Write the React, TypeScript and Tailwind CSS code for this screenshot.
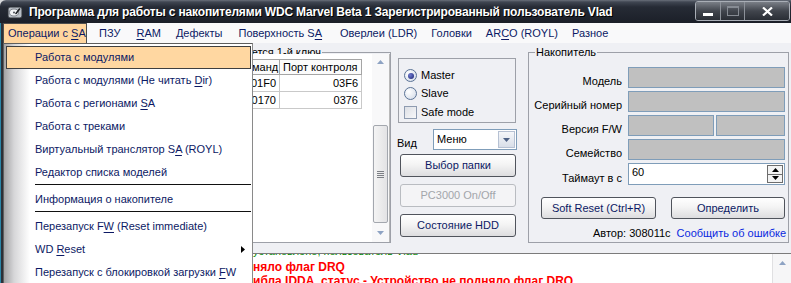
import React from "react";

function U({ c }: { c: string }) {
  return <span className="underline decoration-1 underline-offset-[2px]">{c}</span>;
}

function HddIcon() {
  return (
    <svg width="16" height="16" viewBox="0 0 16 16">
      <rect x="1" y="3" width="14" height="11" rx="2" fill="#b9bfc6" stroke="#2d3137" />
      <ellipse cx="7" cy="8.5" rx="4.5" ry="3.5" fill="#f2f4f6" stroke="#6b7078" strokeWidth="0.8" />
      <circle cx="7" cy="8.5" r="1" fill="#4a4f56" />
      <path d="M12.5 5 L9 9.5" stroke="#1f2226" strokeWidth="1.6" strokeLinecap="round" />
    </svg>
  );
}

function TitleBar() {
  return (
    <div className="h-[23px] flex items-center rounded-tl-[6px] bg-[linear-gradient(to_bottom,#6a707b_0px,#404652_2px,#262b35_7px,#1b1f28_100%)]">
      <div className="w-[29px] shrink-0 flex justify-center pl-[1px]">
        <HddIcon />
      </div>
      <span className="block text-white font-bold whitespace-nowrap text-[12px] tracking-[-0.17px] leading-[16px] [text-shadow:1px_1px_0_#000]">
        Программа для работы с накопителями WDC Marvel Beta 1 Зарегистрированный пользователь Vlad
      </span>
      <div className="ml-auto mr-[1px] self-start mt-[1px] flex h-[20px] rounded-[3px] border border-[#a9aeb6] overflow-hidden">
        <div className="w-[25px] border-r border-[#8c9199] bg-[linear-gradient(to_bottom,#7a7f87,#41454d_50%,#2a2e35)] flex items-end justify-center pb-[4px]">
          <div className="w-[10px] h-[3px] bg-white" />
        </div>
        <div className="w-[24px] border-r border-[#8c9199] bg-[linear-gradient(to_bottom,#7a7f87,#41454d_50%,#2a2e35)] flex items-center justify-center">
          <div className="w-[12px] h-[10px] border border-t-[2px] border-[#868b93]" />
        </div>
        <div className="w-[44px] bg-[linear-gradient(to_bottom,#7a7f87,#41454d_50%,#2a2e35)] flex items-center justify-center">
          <svg width="11" height="9" viewBox="0 0 11 9">
            <path d="M1 0.5 L10 8.5 M10 0.5 L1 8.5" stroke="#ffffff" strokeWidth="2.2" />
          </svg>
        </div>
      </div>
    </div>
  );
}

function MenuBar() {
  return (
    <div className="h-[20px] bg-[#f9f9fa] flex items-stretch text-[#0c1964] text-[11px] whitespace-nowrap">
      <div className="w-[84px] bg-[#ffd59e] border border-b-0 border-[#4d4d4d] flex items-center pl-[4px]">
        <span>
          Операции с <U c="S" />A
        </span>
      </div>
      <div className="flex items-center ml-[4px]">
        <span className="px-[8px]">ПЗУ</span>
        <span className="px-[8px]">
          <U c="R" />AM
        </span>
        <span className="pl-[7px] pr-[8px]">Дефекты</span>
        <span className="px-[8px]">
          Поверхность S<U c="A" />
        </span>
        <span className="pl-[10px] pr-[7px]">Оверлеи (LDR)</span>
        <span className="px-[7px]">Головки</span>
        <span className="px-[7px]">
          AR<U c="C" />O (ROYL)
        </span>
        <span className="pl-[7px] pr-[7px]">Разное</span>
      </div>
    </div>
  );
}

function UpArrow({ color = "#8ea3c3" }: { color?: string }) {
  return (
    <svg width="7" height="4" viewBox="0 0 7 4">
      <path d="M0 4 L3.5 0 L7 4 Z" fill={color} />
    </svg>
  );
}
function DownArrow({ color = "#8ea3c3" }: { color?: string }) {
  return (
    <svg width="7" height="4" viewBox="0 0 7 4">
      <path d="M0 0 L3.5 4 L7 0 Z" fill={color} />
    </svg>
  );
}

function ListView() {
  const cell = "border-r border-b border-[#c9c9c9] h-[17px] flex items-center";
  const head = "border-r border-b border-t border-[#a5a5a5] bg-[#fbfbfb] h-[16px] flex items-center";
  return (
    <div className="mt-[-5px] h-[188px] flex border-r border-[#b9b9b9]">
      <div className="flex-1 bg-white pt-[5px]">
        <div className="grid grid-cols-[204px_70px_82px]">
          <div className={`${head} pl-[3px]`}>Канал</div>
          <div className={`${head} pl-[3px]`}>Порт команд</div>
          <div className={`${head} pl-[3px]`}>Порт контроля</div>
          <div className={`${cell} pl-[3px]`}>Primary</div>
          <div className={`${cell} justify-end pr-[3px]`}>01F0</div>
          <div className={`${cell} justify-end pr-[3px]`}>03F6</div>
          <div className={`${cell} pl-[3px]`}>Secondary</div>
          <div className={`${cell} justify-end pr-[3px]`}>0170</div>
          <div className={`${cell} justify-end pr-[3px]`}>0376</div>
        </div>
      </div>
      <div className="w-[17px] bg-[#f8f8f9] flex flex-col">
        <div className="h-[16px] flex items-center justify-center">
          <UpArrow />
        </div>
        <div className="h-[55px]" />
        <div className="h-[98px] mx-[1px] rounded-[2px] border border-[#a3a7ae] bg-[linear-gradient(to_right,#f4f4f4,#e3e3e5)] flex items-center justify-center">
          <div className="flex flex-col gap-[1px]">
            <div className="w-[7px] h-[1px] bg-[#7c7f85]" />
            <div className="w-[7px] h-[1px] bg-[#7c7f85]" />
            <div className="w-[7px] h-[1px] bg-[#7c7f85]" />
            <div className="w-[7px] h-[1px] bg-[#7c7f85]" />
          </div>
        </div>
        <div className="flex-1 flex items-center justify-center">
          <DownArrow />
        </div>
      </div>
    </div>
  );
}

function Radio({ checked }: { checked?: boolean }) {
  return (
    <span className="w-[13px] h-[13px] rounded-full border border-[#5b7396] bg-[radial-gradient(circle_at_35%_35%,#ffffff,#cfd8e6)] flex items-center justify-center">
      {checked && <span className="w-[6px] h-[6px] rounded-full bg-[radial-gradient(circle_at_35%_35%,#6f7ad0,#1a2370)]" />}
    </span>
  );
}

function Btn({ children, disabled, className }: { children: React.ReactNode; disabled?: boolean; className?: string }) {
  return (
    <div
      className={`flex items-center justify-center rounded-[3px] border whitespace-nowrap ${
        disabled
          ? "border-[#b9bcc1] text-[#a3a6ab] bg-[#f4f4f6]"
          : "border-[#50545c] text-[#0c1964] bg-[linear-gradient(to_bottom,#ffffff,#f4f4f4_45%,#dddddf)]"
      } ${className ?? ""}`}
    >
      {children}
    </div>
  );
}

function Middle() {
  return (
    <div className="w-[137px] flex flex-col">
      <div className="mt-[12px] ml-[7px] w-[118px] h-[65px] border border-[#9da0a8] pt-[8px] pl-[5px]">
        <div className="h-[17px] flex items-center gap-[4px]">
          <Radio checked />
          <span>Master</span>
        </div>
        <div className="h-[19px] flex items-center gap-[4px]">
          <Radio />
          <span>Slave</span>
        </div>
        <div className="h-[18px] flex items-center gap-[4px]">
          <span className="w-[13px] h-[13px] border border-[#8e9bb0] bg-[linear-gradient(135deg,#dcdfe5,#f8f8f9)]" />
          <span>Safe mode</span>
        </div>
      </div>
      <div className="mt-[6px] h-[21px] flex items-end">
        <span className="ml-[6px] w-[36px] leading-[13px]">Вид</span>
        <div className="w-[84px] h-[21px] border border-[#7f9db9] bg-white flex items-center">
          <span className="pl-[3px] flex-1">Меню</span>
          <div className="w-[17px] h-[17px] mr-[1px] border border-[#b6c1d3] bg-[linear-gradient(to_bottom,#f5f7fa,#d8dee8)] flex items-center justify-center">
            <DownArrow color="#4d6185" />
          </div>
        </div>
      </div>
      <Btn className="mt-[4px] ml-[9px] w-[116px] h-[23px]">Выбор папки</Btn>
      <Btn disabled className="mt-[7px] ml-[9px] w-[116px] h-[23px]">
        PC3000 On/Off
      </Btn>
      <Btn className="mt-[7px] ml-[9px] w-[116px] h-[23px]">Состояние HDD</Btn>
    </div>
  );
}

function Row({ label, children }: { label: string; children: React.ReactNode }) {
  return (
    <div className="flex items-end">
      <span className="w-[93px] text-right leading-[13px] whitespace-nowrap">{label}</span>
      <div className="ml-[6px] flex gap-[2px]">{children}</div>
    </div>
  );
}

function Drive() {
  const field = "h-[21px] bg-[#c0c0c0] border border-[#7f9db9]";
  return (
    <fieldset className="w-[261px] h-[197px] border border-[#9da0a8] p-0 m-0">
      <legend className="ml-[6px] px-[1px] leading-[13px]">Накопитель</legend>
      <div className="mt-[8px] flex flex-col gap-[3px]">
        <Row label="Модель">
          <div className={`${field} w-[157px]`} />
        </Row>
        <Row label="Серийный номер">
          <div className={`${field} w-[157px]`} />
        </Row>
        <Row label="Версия F/W">
          <div className={`${field} w-[86px]`} />
          <div className={`${field} w-[69px]`} />
        </Row>
        <Row label="Семейство">
          <div className={`${field} w-[157px]`} />
        </Row>
        <Row label="Таймаут в с">
          <div className="w-[157px] h-[22px] bg-white border border-[#7f9db9] flex">
            <span className="flex-1 pl-[3px] pt-[3px]">60</span>
            <div className="w-[16px] my-[1px] mr-[1px] flex flex-col">
              <div className="flex-1 border border-[#6d6d6d] bg-[#f3f3f3] flex items-center justify-center">
                <UpArrow color="#000" />
              </div>
              <div className="flex-1 border border-t-0 border-[#6d6d6d] bg-[#f3f3f3] flex items-center justify-center">
                <DownArrow color="#000" />
              </div>
            </div>
          </div>
        </Row>
      </div>
      <div className="mt-[12px] flex">
        <Btn className="ml-[12px] w-[115px] h-[22px]">Soft Reset (Ctrl+R)</Btn>
        <Btn className="ml-[15px] w-[114px] h-[22px]">Определить</Btn>
      </div>
      <div className="mt-[8px] flex justify-end pr-[2px] leading-[13px] whitespace-nowrap">
        <span>Автор: 308011с</span>
        <span className="ml-[6px] text-[#0a28e0]">Сообщить об ошибке</span>
      </div>
    </fieldset>
  );
}

function LogLine({ prefix, text, cls }: { prefix: string; text: string; cls: string }) {
  return (
    <div className={`flex whitespace-nowrap ${cls}`}>
      <span className="w-[250px] overflow-hidden text-right shrink-0">{prefix}</span>
      <span>{text}</span>
    </div>
  );
}

function Log() {
  return (
    <div className="h-[30px] border-t border-[#7b7b7b] bg-white flex">
      <div className="flex-1 overflow-hidden">
        <div className="mt-[-11px]">
          <LogLine prefix="Соединение " text="установлено, пользователь Vlad" cls="text-[11px] leading-[17px] text-[#008a00]" />
          <LogLine prefix="Устройство не под" text="няло флаг DRQ" cls="text-[12px] leading-[14px] font-bold text-[#ff0000]" />
          <LogLine prefix="Ответ: ош" text="ибла IDDA, статус - Устройство не подняло флаг DRQ" cls="text-[12px] leading-[14px] font-bold text-[#ff0000]" />
        </div>
      </div>
      <div className="w-[19px] bg-[#f6f6f7] border-l border-[#e0e0e2] flex flex-col items-center pt-[7px]">
        <UpArrow />
      </div>
    </div>
  );
}

function MenuItem({ children, active, arrow }: { children: React.ReactNode; active?: boolean; arrow?: boolean }) {
  return (
    <div
      className={`h-[23px] ml-[2px] mr-[1px] flex items-center pl-[28px] border whitespace-nowrap ${
        active ? "bg-[#ffd7a1] border-[#3f3f3f]" : "border-transparent"
      }`}
    >
      <span>{children}</span>
      {arrow && (
        <svg className="ml-auto mr-[5px]" width="4" height="7" viewBox="0 0 4 7">
          <path d="M0 0 L4 3.5 L0 7 Z" fill="#000" />
        </svg>
      )}
    </div>
  );
}

function Sep() {
  return (
    <div className="h-[4px]">
      <div className="ml-[31px] mr-[1px] h-[1px] bg-[#111]" />
    </div>
  );
}

function Dropdown() {
  return (
    <div className="absolute left-[3px] top-[43px] w-[250px] h-[245px] border border-[#5e5e5e] border-r-[#8a8a8a] pt-[2px] text-[11px] text-[#0c1964] bg-[linear-gradient(to_right,#a2a2a4_0px,#d6d6d8_10px,#ffffff_26px)]">
      <MenuItem active>Работа с модулями</MenuItem>
      <MenuItem>
        Работа с модулями (Не читать <U c="D" />ir)
      </MenuItem>
      <MenuItem>
        Работа с регионами <U c="S" />A
      </MenuItem>
      <MenuItem>Работа с треками</MenuItem>
      <MenuItem>
        Виртуальный транслятор S<U c="A" /> (ROYL)
      </MenuItem>
      <MenuItem>Редактор списка моделей</MenuItem>
      <Sep />
      <MenuItem>Информация о накопителе</MenuItem>
      <Sep />
      <MenuItem>
        Перезапуск F<U c="W" /> (Reset immediate)
      </MenuItem>
      <MenuItem arrow>
        WD <U c="R" />eset
      </MenuItem>
      <MenuItem>
        Перезапуск с блокировкой загрузки <U c="F" />W
      </MenuItem>
    </div>
  );
}

export default function App() {
  return (
    <div className="relative w-[791px] h-[283px] overflow-hidden bg-[#d9dadc] font-['Liberation_Sans',Arial,sans-serif] text-[11px] text-black leading-none">
      <TitleBar />
      <div className="flex h-[260px]">
        <div className="w-[3px] flex">
          <div className="w-[1px] bg-[#2b86a8]" />
          <div className="w-[2px] bg-[#2c3038]" />
        </div>
        <div className="flex-1 flex flex-col">
          <MenuBar />
          <div className="flex-1 flex flex-col bg-[#eff0f4]">
            <div className="h-[210px] flex pt-[3px]">
              <fieldset className="ml-[2px] w-[386px] h-[197px] border border-[#9da0a8] p-0 m-0">
                <legend className="ml-[197px] px-[1px] leading-[13px]">Используется 1-й ключ</legend>
                <ListView />
              </fieldset>
              <Middle />
              <Drive />
            </div>
            <Log />
          </div>
        </div>
      </div>
      <Dropdown />
    </div>
  );
}
